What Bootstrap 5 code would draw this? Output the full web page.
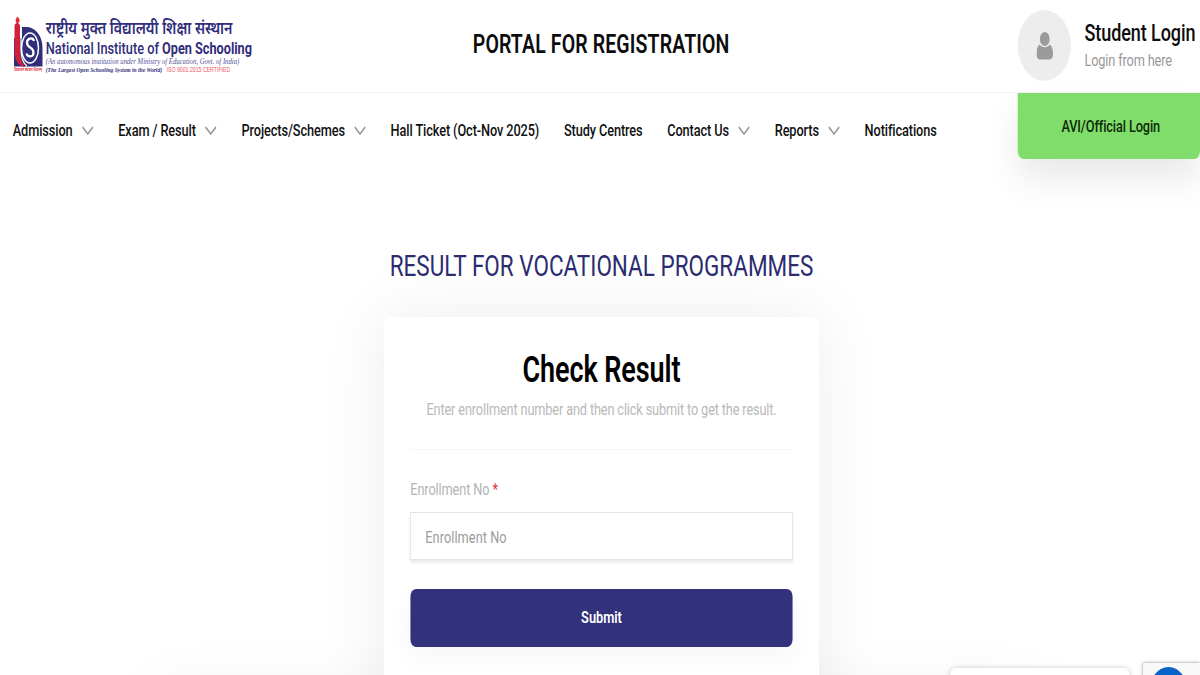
<!DOCTYPE html>
<html lang="en">
  <head>
    <meta charset="UTF-8" />
    <meta name="viewport" content="width=device-width, initial-scale=1.0" />
    <title>NIOS - Result for Vocational Programmes</title>
    <link
      rel="stylesheet"
      href="https://cdn.jsdelivr.net/npm/bootstrap@5.3.0/dist/css/bootstrap.min.css"
    />
    <style>
      body {
        font-family: Roboto, "Liberation Sans", sans-serif;
        color: #111;
      }
      .viewport {
        width: 1200px;
        height: 675px;
      }
      .page {
        width: 1600px;
        height: 675px;
        transform: scaleX(0.75);
        transform-origin: 0 0;
      }
      .top-bar {
        height: 93px;
        border-bottom: 1px solid #f4f4f4;
      }
      .brand-side {
        width: 340px;
      }
      .login-side {
        width: 243px;
        padding-bottom: 1px;
      }
      .portal-title {
        font-size: 26px;
        font-weight: 600;
        letter-spacing: 0.17px;
        padding: 0 94px 3px 0;
        color: #0c0c0c;
      }
      .avatar {
        width: 71px;
        height: 71px;
        background: #ededed;
      }
      .login-text {
        margin-left: 18px;
      }
      .login-title {
        font-size: 24px;
        line-height: 29px;
        font-weight: 500;
        letter-spacing: -0.1px;
        color: #0c0c0c;
      }
      .login-sub {
        font-size: 17px;
        line-height: 24px;
        letter-spacing: -0.2px;
        color: #999;
      }
      .menu-bar {
        height: 74px;
        padding-left: 17px;
      }
      .main-menu {
        gap: 33px;
        padding-top: 1px;
      }
      .main-menu .nav-link {
        font-size: 17px;
        font-weight: 500;
        letter-spacing: -0.14px;
        color: #111;
        gap: 12px;
      }
      .official-btn {
        width: 243px;
        height: 66px;
        padding: 2px 0 0 5px;
        font-size: 17px;
        font-weight: 500;
        letter-spacing: -0.15px;
        color: #0d2a08;
        background: #80dd6b;
        border-radius: 0 0 8px 8px;
        box-shadow: 0 20px 40px rgba(0, 0, 0, 0.09);
      }
      .result-title {
        font-size: 30px;
        line-height: 36px;
        font-weight: 400;
        color: #2c2c70;
        margin: 81px 0 33px;
        padding-left: 4px;
      }
      .result-card {
        width: 580px;
        height: 420px;
        margin-left: 512px;
        padding: 33px 35px;
        border-radius: 8px;
        box-shadow: 0 0 75px rgba(0, 0, 0, 0.08);
      }
      .check-title {
        font-size: 36px;
        line-height: 40px;
        font-weight: 600;
        letter-spacing: -0.1px;
        color: #000;
      }
      .check-hint {
        font-size: 17px;
        line-height: 24px;
        letter-spacing: -0.19px;
        color: #b9b9b9;
        margin-top: 7px;
        padding-bottom: 28px;
        border-bottom: 1px solid #f5f5f5;
      }
      .enroll-label {
        font-size: 17px;
        line-height: 24px;
        letter-spacing: -0.15px;
        color: #b4b4b4;
        margin: 27px 0 11px;
      }
      .enroll-input {
        height: 48px;
        font-size: 17px;
        letter-spacing: 0.08px;
        padding: 1px 19px 0;
        border: 1px solid #e4e4e4;
        box-shadow: 0 3px 3px rgba(0, 0, 0, 0.08);
      }
      .enroll-input::placeholder {
        color: #9c9c9c;
      }
      .submit-btn {
        height: 58px;
        margin-top: 29px;
        font-size: 17px;
        font-weight: 600;
        color: #fff;
        background: #32317c;
        border-radius: 8px;
        box-shadow: 0 10px 30px rgba(0, 0, 0, 0.04);
      }
      .footer-panel {
        width: 1190px;
        height: 60px;
        margin: -40px 0 0 207px;
        box-shadow: 0 0 80px rgba(0, 0, 0, 0.07);
      }
      .chat-tip {
        left: 1267px;
        top: 668px;
        width: 239px;
        height: 40px;
        border-radius: 6px;
        box-shadow: 0 0 6px rgba(0, 0, 0, 0.2);
        z-index: 2;
      }
      .chat-badge {
        left: 1524px;
        top: 663px;
        width: 76px;
        height: 60px;
        background: #f9f9f9;
        box-shadow: 0 0 4px #888;
        border-radius: 3px 0 0 0;
        z-index: 2;
      }
      .chat-badge span {
        width: 54px;
        height: 54px;
        margin: 4px 0 0 7px;
        background: #0a63c9;
      }
    </style>
  </head>
  <body>
    <div class="viewport overflow-hidden">
    <div class="page position-relative bg-white overflow-hidden">
      <header class="top-bar d-flex justify-content-between">
        <svg class="brand-side flex-shrink-0" height="80" viewBox="0 0 340 80">
          <!-- emblem: torch and lens -->
          <g transform="scale(1.3333 1)">
            <path d="M22 27h4c9 0 16.500 8 16.500 21v18.500H14V38h8z" fill="#302d7b" />
            <path d="M21 28v22c0 8 2 13 6 16" fill="none" stroke="#fff" stroke-width="1.200" />
            <path d="M14.500 27c0-3 1-4 2.800-4s2.700 1 2.700 4v24c0 8 2 12 5 15.500h-3c-5-3-7.500-8-7.500-15.500z" fill="#d0203a" />
            <path d="M17.500 16.500c3 3 2.500 6.500 0 6.500s-2.500-3.500 0-6.500z" fill="#e5252f" />
            <ellipse cx="30" cy="48" rx="8.500" ry="15" fill="#302d7b" stroke="#fff" stroke-width="1.500" />
            <path d="M34 41c-1-4-7-3-7 1.500 0 6 6.500 4 6.500 10 0 5-6 5-7 1" fill="none" stroke="#fff" stroke-width="2.200" />
          </g>
          <text x="19" y="71.500" font-size="4.500" font-weight="700" fill="#e03a44" textLength="37" lengthAdjust="spacingAndGlyphs" font-family="Noto Sans, sans-serif">विद्याधनं सर्वधन प्रधानम्</text>
          <g fill="#302d7b">
            <text x="61" y="34.500" font-size="17.500" font-weight="600" textLength="249" lengthAdjust="spacingAndGlyphs" font-family="Noto Sans, sans-serif">राष्ट्रीय मुक्त विद्यालयी शिक्षा संस्थान</text>
            <text x="61" y="54" font-size="17" font-weight="500" textLength="151" lengthAdjust="spacingAndGlyphs">National Institute of</text>
            <text x="216" y="54" font-size="17" font-weight="700" textLength="120" lengthAdjust="spacingAndGlyphs">Open Schooling</text>
            <g font-family="Liberation Serif, serif" font-style="italic">
              <text x="61" y="64" font-size="8.500" fill="#55539a" textLength="258" lengthAdjust="spacingAndGlyphs">(An autonomous institution under Ministry of Education, Govt. of India)</text>
              <text x="61" y="72" font-size="7" font-weight="700" textLength="155" lengthAdjust="spacingAndGlyphs">(The Largest Open Schooling System in the World)</text>
            </g>
          </g>
          <text x="222" y="72" font-size="6.500" fill="#ee5560" textLength="85" lengthAdjust="spacingAndGlyphs" font-family="Liberation Sans, sans-serif">ISO 9001:2015 CERTIFIED</text>
        </svg>
        <div class="portal-title flex-grow-1 d-flex align-items-center justify-content-center text-nowrap">
          <span>PORTAL FOR REGISTRATION</span>
        </div>
        <div class="login-side d-flex align-items-center flex-shrink-0">
          <div class="avatar rounded-circle d-flex align-items-center justify-content-center flex-shrink-0">
            <svg width="22" height="28" viewBox="0 0 22 28" fill="#9b9b9b">
              <ellipse cx="11" cy="7" rx="6.500" ry="7" />
              <path d="M4 12.500c4 3.500 10 3.500 14 0 3 2 4 5 4 10 0 3-2 5-5 5H5c-3 0-5-2-5-5 0-5 1-8 4-10z" />
            </svg>
          </div>
          <div class="login-text text-nowrap">
            <div class="login-title">Student Login</div>
            <div class="login-sub">Login from here</div>
          </div>
        </div>
      </header>

      <nav class="menu-bar d-flex justify-content-between">
        <ul class="main-menu nav flex-nowrap align-items-center text-nowrap" id="mainMenu"></ul>
        <a href="#" class="official-btn d-flex align-items-center justify-content-center text-decoration-none">AVI/Official Login</a>
      </nav>

      <main>
        <h1 class="result-title text-center">RESULT FOR VOCATIONAL PROGRAMMES</h1>
        <form class="result-card bg-white position-relative z-1" id="resultForm">
          <h2 class="check-title text-center mb-0">Check Result</h2>
          <p class="check-hint text-center mb-0">Enter enrollment number and then click submit to get the result.</p>
          <label class="enroll-label d-block" for="enrollNo">Enrollment No <span class="text-danger">*</span></label>
          <input type="text" class="enroll-input form-control rounded-0" id="enrollNo" placeholder="Enrollment No" />
          <button type="submit" class="submit-btn btn w-100">Submit</button>
        </form>
        <div class="footer-panel"></div>
      </main>

      <div class="chat-tip position-absolute bg-white"></div>
      <div class="chat-badge position-absolute">
        <span class="d-block rounded-circle"></span>
      </div>
    </div>
    </div>

    <script src="https://cdn.jsdelivr.net/npm/bootstrap@5.3.0/dist/js/bootstrap.bundle.min.js"></script>
    <script>
      const menu = [
        { text: "Admission", sub: true },
        { text: "Exam / Result", sub: true },
        { text: "Projects/Schemes", sub: true },
        { text: "Hall Ticket (Oct-Nov 2025)" },
        { text: "Study Centres" },
        { text: "Contact Us", sub: true },
        { text: "Reports", sub: true },
        { text: "Notifications" },
      ];

      const chevron = `<svg width="16" height="9" viewBox="0 0 16 9" fill="none" stroke="#999" stroke-width="1.800"><path d="M1 1l7 7 7-7"/></svg>`;

      document.getElementById("mainMenu").innerHTML = menu
        .map(
          (item) => `
            <li class="nav-item">
              <a class="nav-link p-0 d-flex align-items-center" href="#"><span>${item.text}</span>${item.sub ? chevron : ""}</a>
            </li>`
        )
        .join("");

      document.getElementById("resultForm").addEventListener("submit", (e) => {
        e.preventDefault();
      });
    </script>
  </body>
</html>
